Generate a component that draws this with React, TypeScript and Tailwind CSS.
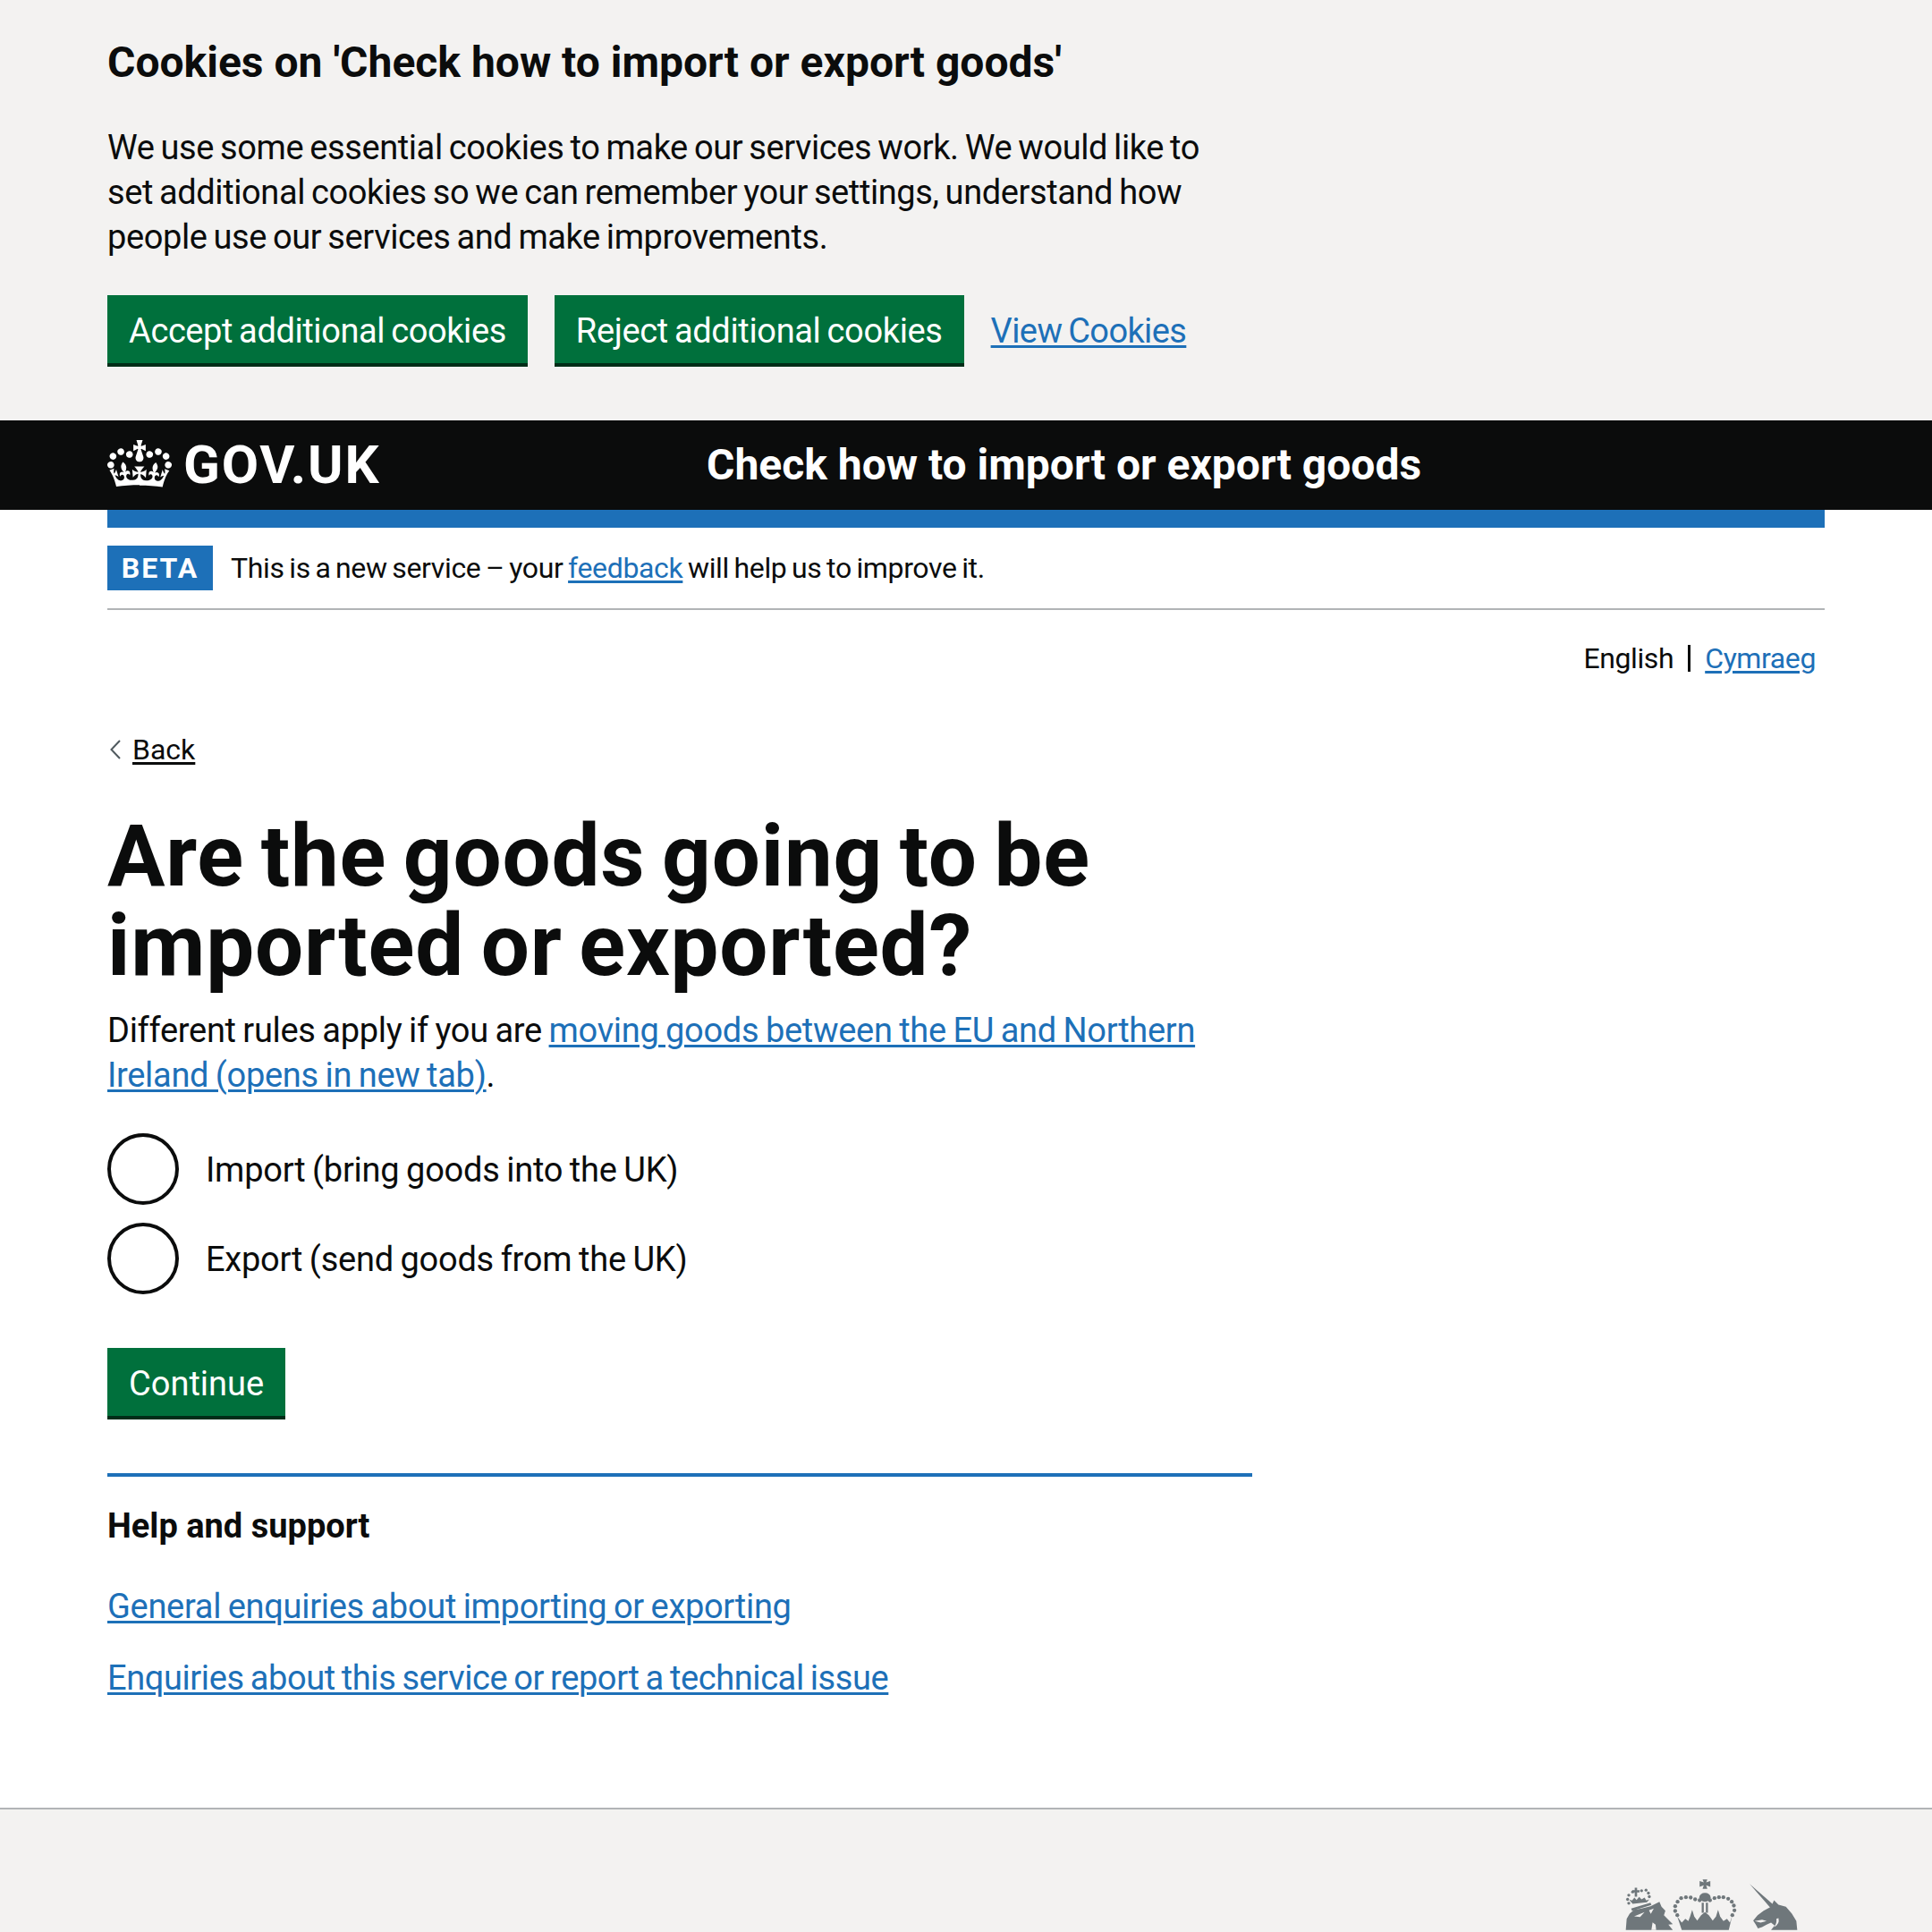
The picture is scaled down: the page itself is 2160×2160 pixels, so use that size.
const font = { fontFamily: 'Roboto, sans-serif' };

function Crown() {
  return (
    <svg viewBox="0 0 132 97" className="w-[72px] h-[53px] shrink-0 mb-[4px]" fill="#ffffff" aria-hidden="true">
      <path fillRule="evenodd" d="M25 30.2c3.5 1.5 7.7-.2 9.1-3.7 1.5-3.6-.2-7.8-3.9-9.2-3.6-1.4-7.6.3-9.1 3.9-1.4 3.5.3 7.5 3.9 9zM9 39.5c3.6 1.5 7.7-.2 9.1-3.7 1.5-3.6-.2-7.8-3.9-9-3.6-1.5-7.6.2-9.1 3.8-1.4 3.5.3 7.5 3.9 8.9zM4.4 57.2c3.5 1.5 7.7-.2 9.1-3.8 1.5-3.6-.2-7.7-3.9-9.1-3.6-1.5-7.6.3-9.1 3.8-1.4 3.5.3 7.6 3.9 9.1zm38.3-21.4c3.5 1.5 7.7-.2 9.1-3.8 1.5-3.6-.2-7.7-3.9-9.1-3.6-1.5-7.6.3-9.1 3.8-1.3 3.6.4 7.7 3.9 9.1zm64.4-5.6c-3.6 1.5-7.8-.2-9.1-3.7-1.5-3.6.2-7.8 3.8-9.2 3.6-1.4 7.7.3 9.2 3.9 1.3 3.5-.4 7.5-3.9 9zm15.9 9.3c-3.6 1.5-7.7-.2-9.1-3.7-1.5-3.6.2-7.8 3.7-9 3.6-1.5 7.7.2 9.2 3.8 1.5 3.5-.3 7.5-3.8 8.9zm4.7 17.7c-3.6 1.5-7.8-.2-9.2-3.8-1.5-3.6.2-7.7 3.9-9.1 3.6-1.5 7.7.3 9.2 3.8 1.3 3.5-.4 7.6-3.9 9.1zM89.3 35.8c-3.6 1.5-7.8-.2-9.2-3.8-1.4-3.6.2-7.7 3.9-9.1 3.6-1.5 7.7.3 9.2 3.8 1.4 3.6-.3 7.7-3.9 9.1zM69.7 17.7l8.9 4.7V9.3l-8.9 2.8c-.2-.3-.5-.6-.9-.9L72.4 0H59.6l3.5 11.2c-.3.3-.6.5-.9.9l-8.8-2.8v13.1l8.8-4.7c.3.3.6.7.9.9l-5 15.4v.1c-.2.8-.4 1.6-.4 2.4 0 4.1 3.1 7.5 7 8.1h.2c.3 0 .7.1 1 .1.4 0 .7 0 1-.1h.2c4-.6 7.1-4.1 7.1-8.1 0-.8-.1-1.7-.4-2.4V34l-5.1-15.4c.4-.2.7-.6 1-.9zM66 92.8c16.9 0 32.8 1.1 47.1 3.2 4-16.9 8.9-26.7 14-33.5l-9.6-3.4c1 4.9 1.1 7.2 0 10.2-1.5-1.4-3-4.3-4.2-8.7L108.6 76c2.8-2 5-3.2 7.5-3.3-4.4 9.4-10 11.9-13.6 11.2-4.3-.8-6.3-4.6-5.6-7.9 1-4.7 5.7-5.9 8-.5 4.3-8.7-3-11.4-7.6-8.8 7.1-7.2 7.9-13.5 2.1-21.1-8 6.1-8.1 12.3-4.5 20.8-4.7-5.4-12.1-2.5-9.5 6.2 3.4-5.2 7.9-2 7.2 3.1-.6 4.3-6.4 7.8-13.5 7.2-10.3-.9-10.9-8-11.2-13 2.5-.5 7.1 1.8 11 7.3L80.2 60c-4.1 4.4-8 5.3-12.3 5.4 1.4-4.4 8-11.6 8-11.6H55.5s6.4 7.2 7.9 11.6c-4.2-.1-8-1-12.3-5.4l1.4 16.4c3.9-5.5 8.5-7.7 10.9-7.3-.3 5-.7 12.1-11 13-7.2.6-12.9-2.9-13.5-7.2-.7-5.1 3.8-8.3 7.1-3.1 2.7-8.7-4.6-11.6-9.4-6.2 3.7-8.5 3.6-14.7-4.6-20.8-5.8 7.6-5 13.9 2.2 21.1-4.7-2.6-11.9.1-7.7 8.8 2.3-5.5 7.1-4.2 8.1.5.7 3.3-1.3 7.1-5.7 7.9-3.5.7-9-1.8-13.5-11.2 2.5.1 4.7 1.3 7.5 3.3l-4.7-15.4c-1.2 4.4-2.7 7.2-4.3 8.7-1.1-3-.9-5.3 0-10.2l-9.5 3.4c5 6.9 9.9 16.7 14 33.5 14.8-2.1 30.8-3.2 47.7-3.2z" />
    </svg>
  );
}

function Crest() {
  const dots: [number, number][] = [[345, 197], [330, 191], [314, 190], [298, 193], [286, 205], [278, 220], [278, 236], [285, 250], [410, 193], [425, 190], [440, 190], [456, 195], [468, 205], [475, 218], [477, 234], [470, 250], [395, 200], [360, 200]];
  const lionDots: [number, number][] = [[118, 197], [122, 183], [135, 172], [165, 168], [180, 166], [188, 176], [191, 188], [122, 210]];
  return (
    <svg viewBox="110 130 580 170" className="w-[193px] h-[57px]" fill="#6f777b" aria-hidden="true">
      {dots.map(([x, y]) => <circle key={`c${x}-${y}`} cx={x} cy={y} r="6.5" />)}
      {lionDots.map(([x, y]) => <circle key={`l${x}-${y}`} cx={x} cy={y} r="5" />)}
      <path d="M370 130h16l-4 10 14-5v20l-14-5 4 12h-16l4-12-14 5v-20l14 5z" />
      <ellipse cx="378" cy="190" rx="19" ry="15" />
      <path d="M367 208h7v34h-7zM381 208h7v34h-7z" />
      <path d="M285 255l15 20 12-13 10 8 6-15 7-23 7 23 10 13 13-18 13-10 13 10 13 18 11-13 7-23 7 23 11 15 12-8 10 13 8-25-12 50H300z" />
      <path d="M142 158h8v8h8v8h-8v14h-8v-14h-8v-8h8z" />
      <path d="M135 212l-12-14 10 3 8-10 7 8 9-10 8 8 10-6 6 10 10-4-8 10z" />
      <path d="M130 228l65-20 3 8-65 20z" />
      <path d="M112 300l3-38 10-17 15-13 25-4 30-8 30-15 7 17 13 13-5 15 30 30-15 2 15 18z" />
      <path d="M140 254l35-14-15 16zM190 234l16-6-10 18zM198 300l4-26 10 8 2 18z" fill="#f3f2f1" />
      <path d="M528 145l80 70-8 13z" />
      <path d="M600 222l10-22 15 15 25 7 20 23 15 25 3 30h-88l12-15-12-10-15 7-15 8-14 5-8-15-8-12 15-18 20-15z" />
      <path d="M545 270l25-5 15 5-20 5zM625 260q5 20-15 30 10-12 8-28z" fill="#f3f2f1" />
    </svg>
  );
}

const Link = ({ children, className = '' }: { children: React.ReactNode; className?: string }) => (
  <a href="#" className={`text-[#1d70b8] underline decoration-[3px] underline-offset-[3px] ${className}`}>{children}</a>
);

const Button = ({ children, className = '' }: { children: React.ReactNode; className?: string }) => (
  <button className={`h-[80px] px-[24px] pt-[3px] bg-[#00703c] text-white text-[38px] leading-[50px] border-b-[4px] border-[#002d18] ${className}`}>
    {children}
  </button>
);

function Radio({ label }: { label: string }) {
  return (
    <label className="flex items-center h-[80px]">
      <span className="w-[80px] h-[80px] rounded-full border-[4px] border-[#0b0c0c] bg-white shrink-0" />
      <span className="ml-[30px] pt-[1px] text-[38px] leading-[50px] tracking-[-0.25px] [word-spacing:-1.5px]">{label}</span>
    </label>
  );
}

export default function App() {
  return (
    <div style={font} className="w-[2160px] h-[2160px] overflow-hidden flex flex-col bg-white text-[#0b0c0c] text-[38px] leading-[50px]">
      <section className="h-[470px] bg-[#f3f2f1] px-[120px] pt-[40px] shrink-0">
        <h2 className="text-[48px] leading-[60px] font-bold">Cookies on 'Check how to import or export goods'</h2>
        <p className="mt-[40px] w-[1250px] tracking-[-0.4px] [word-spacing:-2px]">
          We use some essential cookies to make our services work. We would like to set additional cookies so we can remember your settings, understand how people use our services and make improvements.
        </p>
        <div className="mt-[40px] flex items-center gap-[30px]">
          <Button className="tracking-[-0.4px] [word-spacing:-2px]">Accept additional cookies</Button>
          <Button className="tracking-[-0.35px] [word-spacing:-2px]">Reject additional cookies</Button>
          <Link className="tracking-[-0.6px] [word-spacing:-2px]">View Cookies</Link>
        </div>
      </section>

      <header className="h-[100px] bg-[#0b0c0c] text-white shrink-0 px-[120px] flex items-center">
        <div className="w-[670px] flex items-center gap-[13px]">
          <Crown />
          <span className="text-[60px] leading-[60px] font-bold tracking-[1.8px]">GOV.UK</span>
        </div>
        <span className="text-[48px] leading-[60px] font-bold">Check how to import or export goods</span>
      </header>

      <main className="mx-[120px] flex flex-col shrink-0">
        <div className="h-[20px] bg-[#1d70b8]" />
        <div className="mt-[20px] pb-[20px] border-b-[2px] border-[#b1b4b6] flex items-center">
          <strong className="w-[118px] h-[50px] bg-[#1d70b8] text-white text-[32px] leading-[50px] font-bold tracking-[2px] text-center">BETA</strong>
          <span className="ml-[20px] text-[32px] leading-[50px] tracking-[-0.35px] [word-spacing:-2px]">This is a new service – your <Link>feedback</Link> will help us to improve it.</span>
        </div>
        <div className="mt-[29px] pr-[10px] flex justify-end items-center text-[32px] leading-[50px] tracking-[-0.4px]">
          <span>English</span>
          <span className="mx-[16px] w-[3px] h-[30px] bg-[#0b0c0c]" />
          <Link>Cymraeg</Link>
        </div>
        <a href="#" className="mt-[52px] flex items-center h-[50px] text-[32px]">
          <svg viewBox="0 0 12 22" className="ml-[3px] w-[12px] h-[22px] mr-[13px]" fill="none" stroke="#505a5f" strokeWidth="2"><path d="M11 1 1.5 11 11 21" /></svg>
          <span className="underline decoration-[3px] underline-offset-[3px]">Back</span>
        </a>
        <h1 className="mt-[44px] w-[1280px] text-[96px] leading-[100px] font-bold tracking-[0.8px] [word-spacing:-6px]">Are the goods going to be imported or exported?</h1>
        <p className="mt-[20px] w-[1280px] tracking-[-0.3px] [word-spacing:-1.5px]">Different rules apply if you are <Link>moving goods between the EU and Northern Ireland (opens in new tab)</Link>.</p>
        <div className="mt-[40px] flex flex-col gap-[20px]">
          <Radio label="Import (bring goods into the UK)" />
          <Radio label="Export (send goods from the UK)" />
        </div>
        <div className="mt-[60px]"><Button>Continue</Button></div>
        <section className="mt-[60px] w-[1280px] border-t-[4px] border-[#1d70b8]">
          <h2 className="mt-[30px] text-[38px] leading-[50px] font-bold">Help and support</h2>
          <p className="mt-[40px] tracking-[-0.3px] [word-spacing:-1.5px]"><Link>General enquiries about importing or exporting</Link></p>
          <p className="mt-[30px] tracking-[-0.4px] [word-spacing:-2px]"><Link>Enquiries about this service or report a technical issue</Link></p>
        </section>
      </main>

      <footer className="mt-[120px] flex-1 bg-[#f3f2f1] border-t-[2px] border-[#b1b4b6] flex justify-end pr-[150px] pt-[78px]">
        <Crest />
      </footer>
    </div>
  );
}
